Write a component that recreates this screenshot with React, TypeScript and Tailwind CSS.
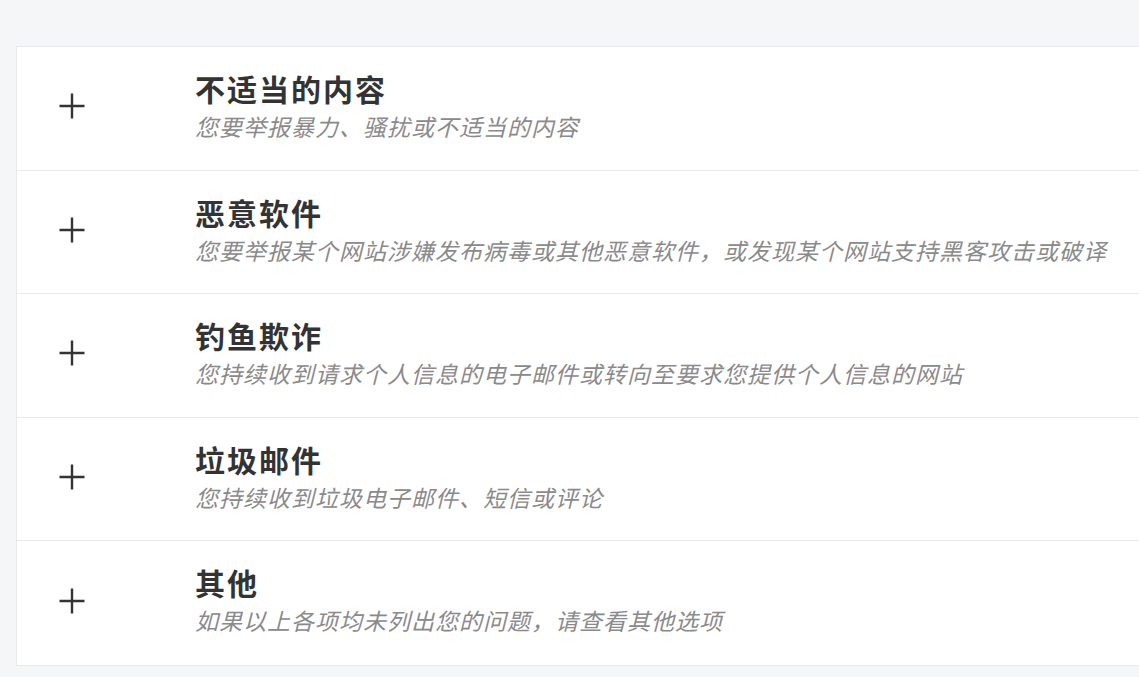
import React from "react";

const items = [
  { t: "不适当的内容", s: "您要举报暴力、骚扰或不适当的内容" },
  { t: "恶意软件", s: "您要举报某个网站涉嫌发布病毒或其他恶意软件，或发现某个网站支持黑客攻击或破译" },
  { t: "钓鱼欺诈", s: "您持续收到请求个人信息的电子邮件或转向至要求您提供个人信息的网站" },
  { t: "垃圾邮件", s: "您持续收到垃圾电子邮件、短信或评论" },
  { t: "其他", s: "如果以上各项均未列出您的问题，请查看其他选项" },
];

export default function App() {
  return (
    <div
      className="w-[1139px] h-[677px] overflow-hidden bg-[#f5f6f8] pt-[46px] pl-[16px]"
      style={{ fontFamily: '"Noto Sans CJK SC", "Noto Sans", sans-serif' }}
    >
      <div className="w-[1160px] border border-[#e7e9ec] bg-white">
        {items.map((it, i) => (
          <div
            key={i}
            className={`flex h-[123.6px] ${i < items.length - 1 ? "border-b border-[#e7e9ec]" : ""}`}
          >
            <div className="w-[178px] shrink-0 pl-[42px] flex items-center pb-[4px]">
              <svg width="26" height="26" viewBox="0 0 26 26">
                <path d="M13 0.5V25.5M0.5 13H25.5" stroke="#333" strokeWidth="2.4" fill="none" />
              </svg>
            </div>
            <div className="flex flex-col pt-[22px]">
              <div className="text-[30px] leading-[38px] font-bold text-[#333] tracking-[2px]">{it.t}</div>
              <div className="mt-[4px] text-[23px] leading-[30px] italic text-[#8a8a8a] tracking-[1px]">{it.s}</div>
            </div>
          </div>
        ))}
      </div>
    </div>
  );
}
